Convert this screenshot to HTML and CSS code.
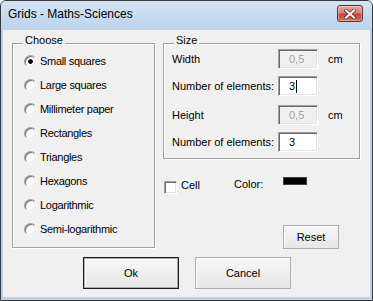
FILE: index.html
```html
<!DOCTYPE html>
<html lang="en">
<head>
    <meta charset="UTF-8">
    <meta name="viewport" content="width=device-width, initial-scale=1.0">
    <title>Grids - Maths-Sciences</title>
    <link rel="stylesheet" href="styles.css">
</head>
<body>
    <div class="window">
        <div class="titlebar">
            <span class="title">Grids - Maths-Sciences</span>
            <button class="close-btn" aria-label="Close">
                <svg width="12" height="10" viewBox="0 0 12 10">
                    <path d="M2 1.5 L10 8.5 M10 1.5 L2 8.5" stroke="#5a2a26" stroke-width="3.6" stroke-linecap="square"/>
                    <path d="M2 1.5 L10 8.5 M10 1.5 L2 8.5" stroke="#ffffff" stroke-width="2" stroke-linecap="square"/>
                </svg>
            </button>
        </div>

        <div class="client">
            <div class="main">
                <!-- Grid type -->
                <div class="group choose">
                    <span class="group-title">Choose</span>
                    <ul class="options">
                        <li class="option"><span class="radio checked"></span>Small squares</li>
                        <li class="option"><span class="radio"></span>Large squares</li>
                        <li class="option"><span class="radio"></span>Millimeter paper</li>
                        <li class="option"><span class="radio"></span>Rectangles</li>
                        <li class="option"><span class="radio"></span>Triangles</li>
                        <li class="option"><span class="radio"></span>Hexagons</li>
                        <li class="option"><span class="radio"></span>Logarithmic</li>
                        <li class="option"><span class="radio"></span>Semi-logarithmic</li>
                    </ul>
                </div>

                <div class="right">
                    <!-- Cell size -->
                    <div class="group size">
                        <span class="group-title">Size</span>
                        <div class="pair">
                            <div class="size-row">
                                <span class="size-label">Width</span>
                                <div class="field disabled">0,5</div>
                                <span class="unit">cm</span>
                            </div>
                            <div class="size-row">
                                <span class="size-label">Number of elements:</span>
                                <div class="field">3<span class="caret"></span></div>
                            </div>
                        </div>
                        <div class="pair">
                            <div class="size-row">
                                <span class="size-label">Height</span>
                                <div class="field disabled">0,5</div>
                                <span class="unit">cm</span>
                            </div>
                            <div class="size-row">
                                <span class="size-label">Number of elements:</span>
                                <div class="field">3</div>
                            </div>
                        </div>
                    </div>

                    <div class="extras">
                        <div class="check-item">
                            <span class="checkbox"></span>
                            <span class="cell-label">Cell</span>
                        </div>
                        <span class="color-label">Color:</span>
                        <span class="swatch"></span>
                    </div>

                    <button class="btn reset">Reset</button>
                </div>
            </div>

            <div class="actions">
                <button class="btn default">Ok</button>
                <button class="btn">Cancel</button>
            </div>
        </div>
    </div>
</body>
</html>
```

FILE: styles.css
```css
body {
    margin: 0;
    background-color: #ffffff;
    font-family: "Liberation Sans", Arial, sans-serif;
    font-size: 11px;
    color: #000000;
}

.window {
    width: 373px;
    height: 301px;
    box-sizing: border-box;
    border: 1px solid #343a40;
    border-radius: 6px 6px 0 0;
    background-color: #b9d1ea;
    display: flex;
    flex-direction: column;
    padding: 0 2px 3px;
}

.titlebar {
    height: 29px;
    flex-shrink: 0;
    margin: 0 -2px;
    padding: 0 9px 0 7px;
    display: flex;
    align-items: flex-start;
    justify-content: space-between;
    border-radius: 5px 5px 0 0;
    background: linear-gradient(#d3e3f4, #bcd3eb);
}

.title {
    margin-top: 6px;
    font-size: 12px;
    line-height: 14px;
}

.close-btn {
    margin-top: 4px;
    width: 26px;
    height: 17px;
    padding: 0;
    border: 1px solid #6d2b27;
    border-radius: 3px;
    background: linear-gradient(#e9a99d 0%, #d8806f 45%, #c7442f 55%, #d0715d 100%);
    box-shadow: inset 0 0 0 1px rgba(255, 255, 255, 0.35);
    display: flex;
    align-items: center;
    justify-content: center;
}

.client {
    flex: 1;
    background-color: #f0f0f0;
    padding: 13px 0 0 9px;
}

.main {
    display: flex;
    gap: 8px;
}

.group {
    position: relative;
    box-sizing: border-box;
    border: 1px solid #a0a0a0;
    box-shadow: inset 1px 1px 0 #ffffff, 1px 1px 0 #ffffff;
}

.group-title {
    position: absolute;
    top: -10px;
    left: 10px;
    padding: 0 2px;
    line-height: 13px;
    background-color: #f0f0f0;
}

.choose {
    width: 143px;
    height: 205px;
    padding: 5px 0 0 11px;
}

.options {
    list-style: none;
    margin: 0;
    padding: 0;
}

.option {
    height: 24px;
    display: flex;
    align-items: center;
    letter-spacing: -0.3px;
}

.radio {
    width: 13px;
    height: 13px;
    box-sizing: border-box;
    margin-right: 3px;
    border: 1px solid;
    border-color: #a0a0a0 #ffffff #ffffff #a0a0a0;
    border-radius: 50%;
    background-color: #ffffff;
    box-shadow: inset 1px 1px 0 #696969, inset -1px -1px 0 #e3e3e3;
}

.radio.checked {
    background: radial-gradient(circle, #000000 0 2px, #ffffff 2.6px);
}

.right {
    width: 197px;
    display: flex;
    flex-direction: column;
    align-items: flex-start;
}

.size {
    width: 197px;
    height: 116px;
    padding: 5px 0 0 8px;
}

.pair {
    display: flex;
    flex-direction: column;
    gap: 7px;
}

.pair + .pair {
    margin-top: 9px;
}

.size-row {
    height: 20px;
    display: flex;
    align-items: center;
}

.size-label {
    width: 106px;
}

.field {
    width: 40px;
    height: 20px;
    box-sizing: border-box;
    padding-left: 10px;
    display: flex;
    align-items: center;
    border: 1px solid;
    border-color: #a0a0a0 #ffffff #ffffff #a0a0a0;
    background-color: #ffffff;
    box-shadow: inset 1px 1px 0 #696969, inset -1px -1px 0 #e3e3e3;
}

.field.disabled {
    color: #a0a0a0;
    background-color: #f0f0f0;
}

.caret {
    width: 1px;
    height: 13px;
    margin-left: 1px;
    background-color: #000000;
}

.unit {
    margin-left: 10px;
}

.extras {
    height: 16px;
    margin-top: 18px;
    display: flex;
    align-items: flex-start;
}

.check-item {
    width: 70px;
    margin-left: 1px;
    display: flex;
    align-items: flex-start;
}

.checkbox {
    width: 13px;
    height: 13px;
    box-sizing: border-box;
    margin-top: 4px;
    border: 1px solid;
    border-color: #a0a0a0 #ffffff #ffffff #a0a0a0;
    background-color: #ffffff;
    box-shadow: inset 1px 1px 0 #696969, inset -1px -1px 0 #e3e3e3;
}

.cell-label {
    margin: 2px 0 0 4px;
    line-height: 13px;
}

.color-label {
    width: 49px;
    margin-top: 1px;
    line-height: 13px;
}

.swatch {
    width: 24px;
    height: 8px;
    box-sizing: border-box;
    border: 1px solid #404040;
    background-color: #000000;
}

.btn {
    box-sizing: border-box;
    padding: 0;
    font-family: "Liberation Sans", Arial, sans-serif;
    font-size: 11px;
    color: #000000;
    border: 1px solid #adadad;
    background: linear-gradient(#f7f7f7, #e6e6e6);
    box-shadow: inset 1px 1px 0 #ffffff;
}

.reset {
    width: 56px;
    height: 24px;
    margin: 32px 0 0 120px;
}

.actions {
    display: flex;
    gap: 16px;
    margin-top: 8px;
    padding-left: 71px;
}

.actions .btn {
    width: 96px;
    height: 32px;
}

.btn.default {
    border-color: #1a1a1a;
    box-shadow: inset 0 0 0 1px #adadad, inset 2px 2px 0 #ffffff;
}
```
